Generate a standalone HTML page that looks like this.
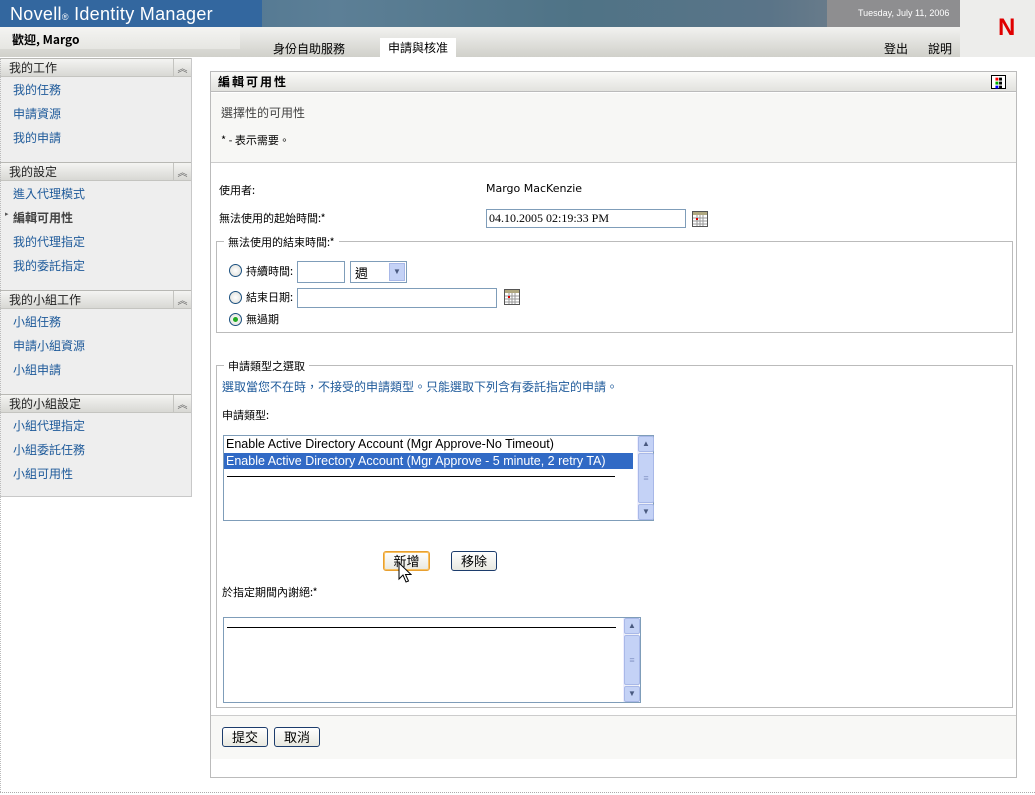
<!DOCTYPE html>
<html><head><meta charset="utf-8">
<style>
*{margin:0;padding:0;box-sizing:border-box}
body{width:1035px;height:795px;position:relative;background:#fff;font-family:"Liberation Sans","Noto Sans CJK TC",sans-serif;font-size:12px;color:#000;overflow:hidden}
.a{position:absolute}
.cj{font-family:"Noto Sans CJK TC","WenQuanYi Zen Hei",sans-serif}
.sh{position:absolute;left:0;width:191px;height:19px;background:linear-gradient(#f4f4f2,#d8d8d4);border-top:1px solid #b8b8b4;border-bottom:1px solid #c4c4c0;font-size:12px;line-height:17px;padding-left:9px;color:#222}
.sh i{position:absolute;right:0;top:0;width:18px;height:17px;border-left:1px solid #c4c4c0;font-style:normal;text-align:center;font-size:10px;color:#666;line-height:17px}
.li{position:absolute;left:13px;color:#1e5a9a;font-size:12px}
.inp{position:absolute;border:1px solid #7f9db9;background:#fff}
.btn{position:absolute;height:20px;border:1px solid #1c3c6c;border-radius:3px;background:linear-gradient(#fff,#e8e8e0);font-size:13px;text-align:center;line-height:17px}
.rad{position:absolute;width:13px;height:13px;border:1px solid #1c5180;border-radius:50%;background:radial-gradient(#fff,#dcdcd6)}
.sb{position:absolute;width:16px;background:#eef0f8;border-left:1px solid #eef}
.sb b{position:absolute;left:0;width:16px;height:16px;background:#c4d2f6;border:1px solid #a8b8e8;border-radius:2px;color:#4a5a80;font-size:8px;text-align:center;line-height:14px}
.sb s{position:absolute;left:0;width:16px;background:#c4d2f6;border:1px solid #a8b8e8;border-radius:2px;text-decoration:none;color:#8898c8;font-size:9px;text-align:center}
</style></head><body>
<div class="a" style="left:0;top:0;width:960px;height:27px;background:linear-gradient(90deg,#426a8c 0%,#5c7f96 35%,#4f7386 60%,#5a7488 80%,#868a8e 100%)"></div>
<div class="a" style="left:0;top:0;width:262px;height:27px;background:#33679f"></div>
<div class="a" style="left:10px;top:4px;color:#fff;font-size:18px;letter-spacing:0.3px">Novell<span style="font-size:9px">®</span> Identity Manager</div>
<div class="a" style="left:827px;top:0;width:133px;height:27px;background:#8e8e90"></div>
<div class="a" style="left:858px;top:8px;color:#fff;font-size:9px">Tuesday, July 11, 2006</div>
<div class="a" style="left:960px;top:0;width:75px;height:57px;background:#ededeb"></div>
<div class="a" style="left:998px;top:14px;color:#e00000;font-size:24px;font-weight:bold;font-family:'Liberation Sans'">N</div>
<div class="a" style="left:0;top:27px;width:960px;height:30px;background:linear-gradient(#f2f2f0,#d0d0ca)"></div>
<div class="a" style="left:0;top:27px;width:240px;height:22px;background:linear-gradient(#f4f4f2,#e6e6e2)"></div>
<div class="a cj" style="left:12px;top:31px;font-size:12px;font-weight:bold">歡迎, Margo</div>
<div class="a cj" style="left:273px;top:40px;font-size:12px">身份自助服務</div>
<div class="a" style="left:380px;top:38px;width:76px;height:19px;background:#fff"></div>
<div class="a cj" style="left:388px;top:39px;font-size:12px">申請與核准</div>
<div class="a cj" style="left:884px;top:40px;font-size:12px">登出</div>
<div class="a cj" style="left:928px;top:40px;font-size:12px">說明</div>
<div class="a" style="left:0;top:58px;width:192px;height:439px;background:#eeeeee;border-right:1px solid #c8c8c8;border-bottom:1px solid #c8c8c8"></div>
<div class="sh cj" style="top:58px">我的工作<i>︽</i></div>
<div class="li cj" style="top:81px">我的任務</div>
<div class="li cj" style="top:105px">申請資源</div>
<div class="li cj" style="top:129px">我的申請</div>
<div class="sh cj" style="top:162px">我的設定<i>︽</i></div>
<div class="li cj" style="top:185px">進入代理模式</div>
<div class="a" style="left:5px;top:210px;font-size:7px;color:#555">▸</div>
<div class="li cj" style="top:209px;color:#444;font-weight:bold">編輯可用性</div>
<div class="li cj" style="top:233px">我的代理指定</div>
<div class="li cj" style="top:257px">我的委託指定</div>
<div class="sh cj" style="top:290px">我的小組工作<i>︽</i></div>
<div class="li cj" style="top:313px">小組任務</div>
<div class="li cj" style="top:337px">申請小組資源</div>
<div class="li cj" style="top:361px">小組申請</div>
<div class="sh cj" style="top:394px">我的小組設定<i>︽</i></div>
<div class="li cj" style="top:417px">小組代理指定</div>
<div class="li cj" style="top:441px">小組委託任務</div>
<div class="li cj" style="top:465px">小組可用性</div>
<div class="a" style="left:210px;top:71px;width:807px;height:707px;border:1px solid #bbb;background:#fff"></div>
<div class="a" style="left:211px;top:72px;width:805px;height:20px;background:linear-gradient(#fafaf8,#e2e2de);border-bottom:1px solid #bbb"></div>
<div class="a cj" style="left:218px;top:73px;font-weight:bold;font-size:12px;letter-spacing:2px">編輯可用性</div>
<div class="a" style="left:991px;top:75px;width:15px;height:14px;border:1px solid #000;background:#fff;font-size:6px;line-height:4px;padding:2px 0 0 3px"><span style="color:red">■</span>■<br><span style="color:#0a0">■</span>■<br><span style="color:#00f">■</span>■</div>
<div class="a" style="left:211px;top:93px;width:805px;height:70px;background:#f7f7f5;border-bottom:1px solid #ccc"></div>
<div class="a cj" style="left:221px;top:104px;font-size:12px;color:#444">選擇性的可用性</div>
<div class="a cj" style="left:221px;top:132px;font-size:11px">* - 表示需要。</div>
<div class="a cj" style="left:219px;top:182px;font-size:11px">使用者:</div>
<div class="a" style="left:486px;top:182px;font-family:'DejaVu Sans',sans-serif;font-size:11px">Margo MacKenzie</div>
<div class="a cj" style="left:219px;top:210px;font-size:11px">無法使用的起始時間:*</div>
<div class="inp" style="left:486px;top:209px;width:200px;height:19px;font-family:'Liberation Serif';font-size:12px;padding:1px 2px">04.10.2005 02:19:33 PM</div>
<svg class="a" style="left:692px;top:211px" width="16" height="16"><rect x="0.5" y="0.5" width="15" height="15" fill="#fff" stroke="#555"/><rect x="1" y="1" width="14" height="3" fill="#b0a880"/><path d="M5 4V15M8 4V15M11 4V15M1 7H15M1 10H15M1 13H15" stroke="#999"/><rect x="4" y="7" width="2" height="2" fill="#d00"/></svg>
<div class="a" style="left:216px;top:241px;width:797px;height:92px;border:1px solid #bbb"></div>
<div class="a cj" style="left:224px;top:234px;background:#fff;padding:0 4px;font-size:11px">無法使用的結束時間:*</div>
<div class="rad" style="left:229px;top:264px"></div>
<div class="a cj" style="left:246px;top:263px;font-size:11px">持續時間:</div>
<div class="inp" style="left:297px;top:261px;width:48px;height:22px"></div>
<div class="inp" style="left:350px;top:261px;width:57px;height:22px;font-size:13px;padding:1px 4px"><span class="cj">週</span><div class="a" style="right:1px;top:1px;width:16px;height:18px;background:#c4d2f6;border:1px solid #a8b8e8;color:#4a5a80;font-size:8px;text-align:center;line-height:16px">▼</div></div>
<div class="rad" style="left:229px;top:291px"></div>
<div class="a cj" style="left:246px;top:289px;font-size:11px">結束日期:</div>
<div class="inp" style="left:297px;top:288px;width:200px;height:20px"></div>
<svg class="a" style="left:504px;top:289px" width="16" height="16"><rect x="0.5" y="0.5" width="15" height="15" fill="#fff" stroke="#555"/><rect x="1" y="1" width="14" height="3" fill="#b0a880"/><path d="M5 4V15M8 4V15M11 4V15M1 7H15M1 10H15M1 13H15" stroke="#999"/><rect x="4" y="7" width="2" height="2" fill="#d00"/></svg>
<div class="rad" style="left:229px;top:313px"><div class="a" style="left:3px;top:3px;width:5px;height:5px;border-radius:50%;background:#2a2"></div></div>
<div class="a cj" style="left:246px;top:311px;font-size:11px">無過期</div>
<div class="a" style="left:216px;top:365px;width:797px;height:343px;border:1px solid #bbb"></div>
<div class="a cj" style="left:224px;top:358px;background:#fff;padding:0 4px;font-size:11px">申請類型之選取</div>
<div class="a cj" style="left:222px;top:378px;font-size:12px;color:#1e5a9a">選取當您不在時，不接受的申請類型。只能選取下列含有委託指定的申請。</div>
<div class="a cj" style="left:222px;top:407px;font-size:11px">申請類型:</div>
<div class="inp" style="left:223px;top:435px;width:431px;height:86px"></div>
<div class="a" style="left:226px;top:437px;font-size:12.5px">Enable Active Directory Account (Mgr Approve-No Timeout)</div>
<div class="a" style="left:224px;top:453px;width:409px;height:16px;background:#316ac5;color:#fff;font-size:12.5px;padding-left:2px;line-height:16px">Enable Active Directory Account (Mgr Approve - 5 minute, 2 retry TA)</div>
<div class="a" style="left:227px;top:476px;width:388px;height:1px;background:#000"></div>
<div class="sb" style="left:637px;top:436px;height:84px"><b style="top:0">▲</b><s style="top:17px;height:50px;line-height:48px">≡</s><b style="top:68px">▼</b></div>
<div class="btn cj" style="left:383px;top:551px;width:47px;border-color:#e8a030;box-shadow:inset 0 0 0 1px #f8c060">新增</div>
<svg class="a" style="left:398px;top:562px" width="14" height="22"><path d="M1 1V17L5 13L8 20L10.5 19L7.5 12.5H13Z" fill="#fff" stroke="#000" stroke-width="1"/></svg>
<div class="btn cj" style="left:451px;top:551px;width:46px">移除</div>
<div class="a cj" style="left:222px;top:584px;font-size:11px">於指定期間內謝絕:*</div>
<div class="inp" style="left:223px;top:617px;width:418px;height:86px"></div>
<div class="a" style="left:227px;top:627px;width:389px;height:1px;background:#000"></div>
<div class="sb" style="left:623px;top:618px;height:84px"><b style="top:0">▲</b><s style="top:17px;height:50px;line-height:48px">≡</s><b style="top:68px">▼</b></div>
<div class="a" style="left:211px;top:715px;width:805px;height:44px;background:#f8f8f6;border-top:1px solid #ccc"></div>
<div class="btn cj" style="left:222px;top:727px;width:46px">提交</div>
<div class="btn cj" style="left:274px;top:727px;width:46px">取消</div>
<div class="a" style="left:0;top:792px;width:1035px;height:1px;border-top:1px dotted #aaa"></div>
<div class="a" style="left:0;top:58px;width:1px;height:734px;border-left:1px dotted #bbb"></div>
</body></html>
